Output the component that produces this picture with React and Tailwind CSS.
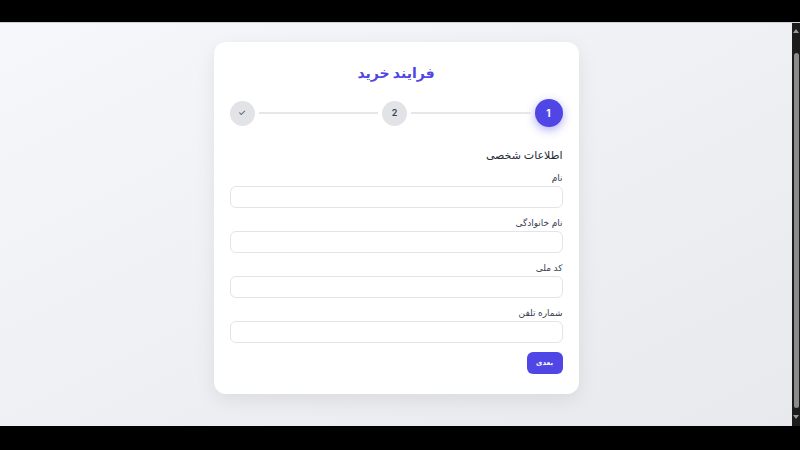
const fields = ['نام', 'نام خانوادگی', 'کد ملی', 'شماره تلفن']

function Step({ label, active, thin }) {
  if (active) {
    return (
      <div className="w-[28px] h-[28px] shrink-0 rounded-full bg-[#4f46e5] flex items-center justify-center text-white text-[10px] font-bold shadow-[0_3px_10px_rgba(79,70,229,0.45)]">
        {label}
      </div>
    )
  }
  return (
    <div className={`w-[25px] h-[25px] shrink-0 rounded-full bg-[#e2e3e6] flex items-center justify-center text-[#374151] text-[9px] ${thin ? 'font-normal' : 'font-semibold'}`}>
      {label}
    </div>
  )
}

function Scrollbar() {
  return (
    <div className="w-[8px] bg-[#1c1c1c] flex flex-col items-center">
      <div className="h-[10px] flex items-end">
        <div className="w-0 h-0 border-x-[3px] border-x-transparent border-b-[4px] border-b-[#9a9a9a]" />
      </div>
      <div className="w-[5px] mt-[20px] h-[355px] rounded-full bg-[#8b8b8b]" />
      <div className="flex-1 flex items-center">
        <div className="w-0 h-0 border-x-[3px] border-x-transparent border-t-[4px] border-t-[#9a9a9a]" />
      </div>
    </div>
  )
}

export default function App() {
  return (
    <div className="w-[800px] h-[450px] bg-black flex flex-col font-['Inter','DejaVu_Sans',sans-serif]">
      <div className="h-[22px] bg-black" />
      <div className="h-[404px] flex border-t border-[#cfd0d4]">
        <main className="flex-1 bg-gradient-to-br from-[#f6f7fa] to-[#e8e9ed] flex justify-center pt-[19px]">
          <div dir="rtl" className="w-[365px] h-[352px] bg-white rounded-xl shadow-[0_6px_20px_rgba(0,0,0,0.08)] px-4 pt-5">
            <h1 className="text-center text-[14px] leading-[22px] font-bold text-[#4f46e5]">فرایند خرید</h1>

            <div className="mt-[15px] flex items-center h-[28px]">
              <Step label="1" active />
              <div className="flex-1 h-[2px] bg-[#e5e7eb] mx-1" />
              <Step label="2" />
              <div className="flex-1 h-[2px] bg-[#e5e7eb] mx-1" />
              <Step label="✓" thin />
            </div>

            <h2 className="mt-[18px] text-[11px] leading-[20px] font-medium text-[#1f2937]">اطلاعات شخصی</h2>

            <div className="mt-[6px] flex flex-col gap-[8px]">
              {fields.map((f) => (
                <div key={f}>
                  <label className="block text-[9px] leading-[14px] text-[#374151] mb-[1px]">{f}</label>
                  <div className="h-[22px] rounded-md border border-[#e3e4e8] bg-white" />
                </div>
              ))}
            </div>

            <div className="mt-[9px] flex">
              <button className="w-[36px] h-[22px] rounded-md bg-[#4f46e5] text-white text-[7px] font-bold">بعدی</button>
            </div>
          </div>
        </main>
        <Scrollbar />
      </div>
      <div className="flex-1 bg-black" />
    </div>
  )
}
